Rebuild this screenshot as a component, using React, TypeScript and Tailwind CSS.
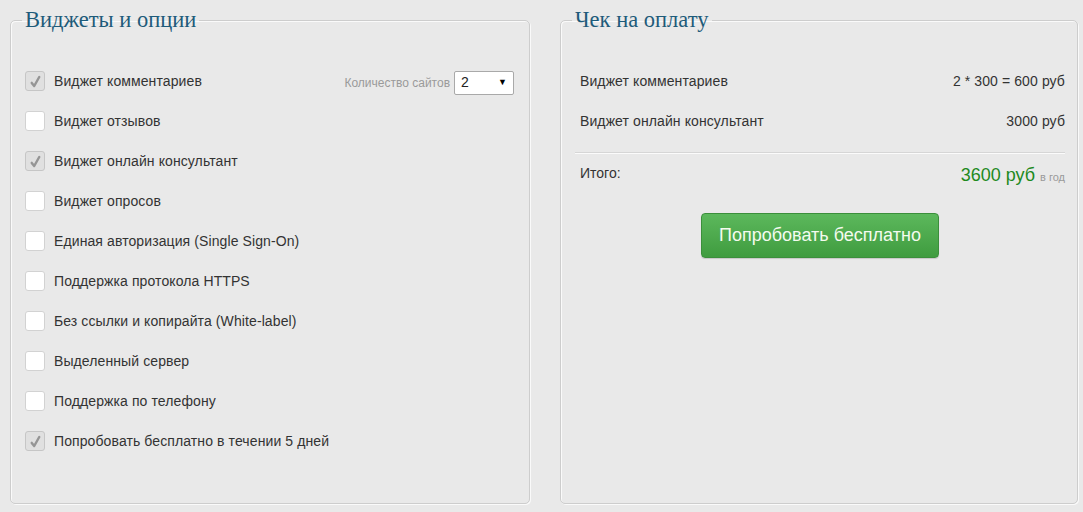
import { type ReactNode } from 'react';

const options = [
  { label: 'Виджет комментариев', checked: true, sites: true },
  { label: 'Виджет отзывов', checked: false },
  { label: 'Виджет онлайн консультант', checked: true },
  { label: 'Виджет опросов', checked: false },
  { label: 'Единая авторизация (Single Sign-On)', checked: false },
  { label: 'Поддержка протокола HTTPS', checked: false },
  { label: 'Без ссылки и копирайта (White-label)', checked: false },
  { label: 'Выделенный сервер', checked: false },
  { label: 'Поддержка по телефону', checked: false },
  { label: 'Попробовать бесплатно в течении 5 дней', checked: true },
];

function Checkbox({ checked }: { checked: boolean }) {
  return (
    <span
      className={
        checked
          ? 'flex h-5 w-5 items-center justify-center rounded-[3px] border border-[#c6c6c6] bg-[#e0e0e0]'
          : 'flex h-5 w-5 items-center justify-center rounded-[3px] border border-[#d2d2d2] bg-white'
      }
    >
      {checked && (
        <svg viewBox="0 0 16 16" className="h-[15px] w-[15px]">
          <path d="M4 9.5 L6.6 12.8 L12 3.2" fill="none" stroke="#959595" strokeWidth="2.6" strokeLinecap="round" strokeLinejoin="round" />
        </svg>
      )}
    </span>
  );
}

function Panel({ title, children, className }: { title: string; children: ReactNode; className: string }) {
  return (
    <fieldset
      className={`rounded-[5px] border border-[#cdcdcd] shadow-[1px_1px_0_#fafafa,inset_1px_1px_0_#fafafa] pl-[14px] pt-[28px] ${className}`}
    >
      <legend className="-ml-[3px] px-[3px] font-['Liberation_Serif','Times_New_Roman',serif] text-[22.5px] leading-[26px] text-[#1e5b7a]">
        {title}
      </legend>
      {children}
    </fieldset>
  );
}

export default function App() {
  return (
    <div className="min-h-[512px] bg-[#e9e9e9] pl-[10px] pt-[7px] font-['Liberation_Sans',Arial,sans-serif] text-[14px] text-[#333]">
      <div className="flex gap-[30px]">
        <Panel title="Виджеты и опции" className="h-[497px] w-[520px] pr-[14px]">
          <ul>
            {options.map((o) => (
              <li key={o.label} className="flex h-10 items-center">
                <Checkbox checked={o.checked} />
                <span className="ml-[9px] tracking-[0.1px]">{o.label}</span>
                {o.sites && (
                  <div className="ml-auto mr-[1px] flex items-center gap-[4px]">
                    <span className="mt-[3px] text-[12px] text-[#9a9a9a]">Количество сайтов</span>
                    <div className="mt-[3px] flex h-6 w-[60px] items-center justify-between rounded-[2px] border border-[#a9a9a9] bg-white pl-[6px] pr-[6px]">
                      <span className="text-[14px] text-[#222]">2</span>
                      <span className="text-[9px] text-black">▼</span>
                    </div>
                  </div>
                )}
              </li>
            ))}
          </ul>
        </Panel>

        <Panel title="Чек на оплату" className="h-[497px] w-[518px] pr-[12px]">
          <div className="flex h-10 items-center justify-between pl-[5px] tracking-[0.1px]">
            <span>Виджет комментариев</span>
            <span>2 * 300 = 600 руб</span>
          </div>
          <div className="flex h-10 items-center justify-between pl-[5px] tracking-[0.1px]">
            <span>Виджет онлайн консультант</span>
            <span>3000 руб</span>
          </div>
          <div className="mt-[11px] border-t border-b border-t-[#d6d6d6] border-b-[#fbfbfb]" />
          <div className="flex items-start justify-between pl-[5px] pt-[11px]">
            <span className="leading-[16px]">Итого:</span>
            <span className="leading-[21px]">
              <span className="text-[18px] text-[#1e8a1e]">3600 руб</span>
              <span className="ml-[5px] text-[11px] text-[#9a9a9a]">в год</span>
            </span>
          </div>
          <div className="mt-[25px] flex justify-center">
            <button className="h-[45px] w-[238px] rounded-[4px] border border-[#3b8f3b] bg-gradient-to-b from-[#5cb85c] to-[#3f9c3f] text-[18px] text-[#f4fbef] shadow-[0_1px_1px_rgba(0,0,0,0.15)]">
              Попробовать бесплатно
            </button>
          </div>
        </Panel>
      </div>
    </div>
  );
}
